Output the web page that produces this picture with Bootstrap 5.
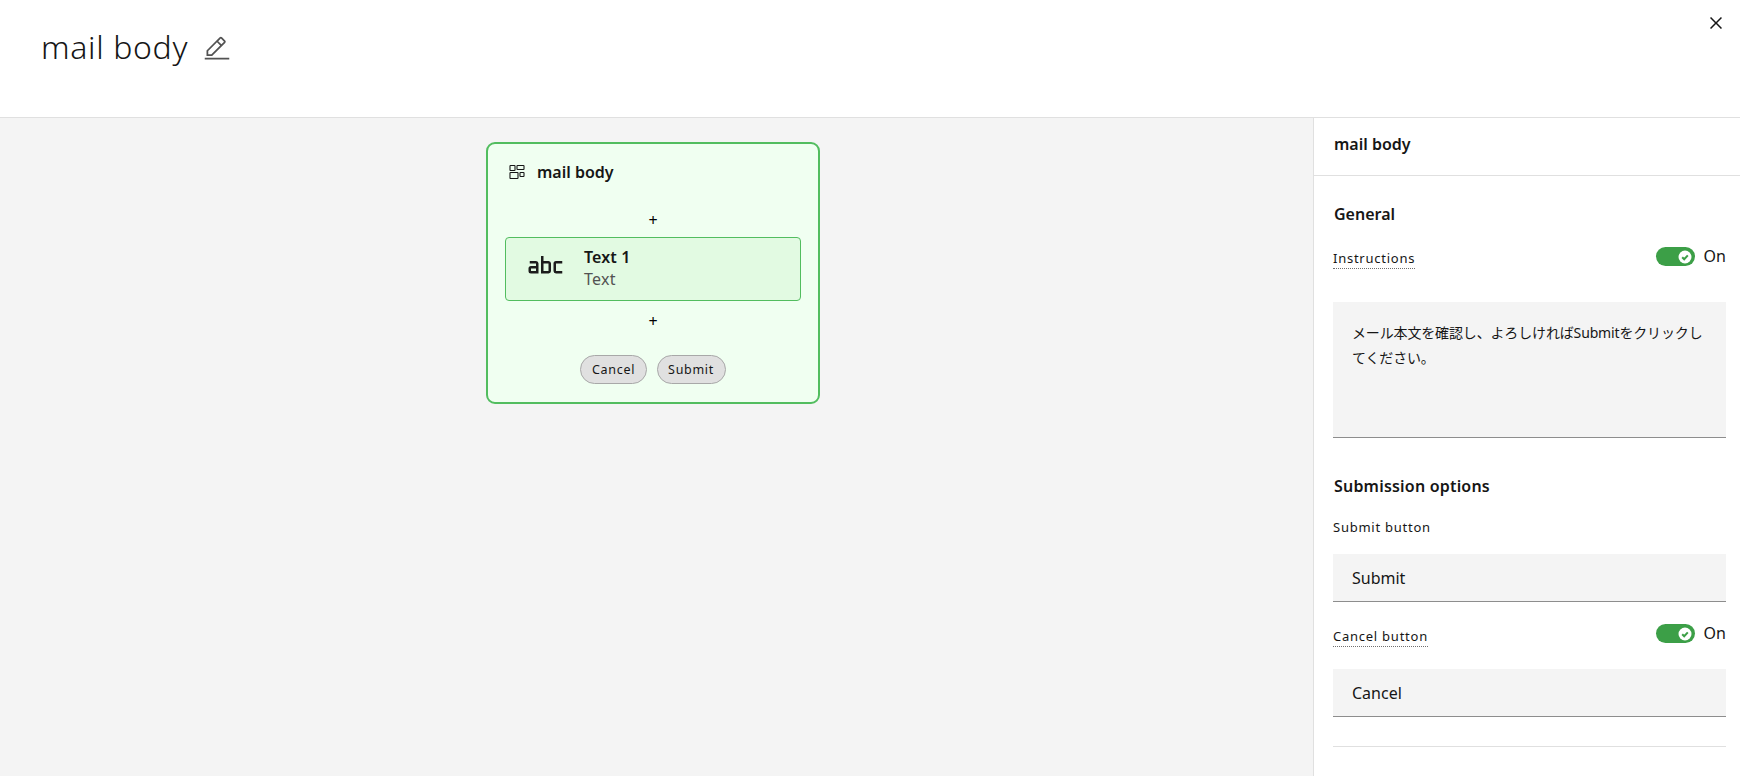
<!DOCTYPE html>
<html lang="ja">
<head>
<meta charset="utf-8">
<title>mail body</title>
<link href="https://cdn.jsdelivr.net/npm/bootstrap@5.3.0/dist/css/bootstrap.min.css" rel="stylesheet">
<style>
html,body{height:100%;overflow:hidden}
body{font-family:"Noto Sans","Noto Sans CJK JP",sans-serif;color:#161616;background:#fff}
.app-root{height:776px}
.top-head{height:118px;border-bottom:1px solid #e0e0e0;padding:25px 12px 0 41px}
.page-title{font-size:32px;line-height:44px;font-weight:300;margin:0;letter-spacing:.65px}
.edit-ico{width:28px;height:28px;margin-left:15px;margin-top:10px;color:#525252}
.close-ico{width:24px;height:24px;margin-top:-14px}
.canvas-area{background:#f4f4f4;padding:24px 0 0 486px;min-width:0}
.flow-box{width:334px;height:262px;border:2px solid #52bd5f;border-radius:9px;background:#f0fff1;padding:0 17px}
.flow-head{height:50px;padding:6px 0 0 4px;gap:12px;font-size:16px;font-weight:600}
.flow-head svg{width:16px;height:16px}
.plus-row{height:35px;font-size:16px;line-height:35px;text-align:center;color:#000}
.plus-first{margin-top:9px;height:34px}
.plus-last{height:41px;line-height:41px}
.field-item{height:64px;border:1px solid #52bd5f;border-radius:4px;background:#e2fae2;padding:8px 0 0 20px;gap:18px}
.field-item svg{width:40px;height:40px;margin-top:0;color:#1c1c1c;flex:none}
.field-name{font-size:16px;font-weight:600;line-height:22px;letter-spacing:.1px}
.field-type{font-size:16px;line-height:22px;color:#525252;letter-spacing:.3px}
.pill-row{gap:10px;margin-top:13px}
.pill-btn{height:29px;border:1px solid #a8a8a8;border-radius:15px;background:#e0e0e0;color:#161616;font-size:12.5px;line-height:27px;padding:0 10.5px;letter-spacing:.7px}
.side-panel{width:427px;border-left:1px solid #e0e0e0;background:#fff;flex:none}
.side-title{height:58px;border-bottom:1px solid #e0e0e0;padding:0 20px;font-size:16px;font-weight:600;line-height:52px}
.side-body{padding:0 14px 0 19px}
.sec-title{font-size:16px;font-weight:600;line-height:22px;margin:0 0 0 1px}
.sec-first{margin-top:27px}
.sec-second{margin-top:37px;letter-spacing:.2px}
.lbl{font-size:13px;letter-spacing:.75px;line-height:16px;display:inline-block}
.lbl-dot{border-bottom:1px dotted #6f6f6f;padding-bottom:2px;margin-top:3px}
.lbl-low{margin-top:4px}
.lbl-row{height:27px}
.row-one{margin-top:22px}
.switch-wrap{gap:9px;font-size:16px;line-height:16px}
.switch-text{margin-top:-2px}
.switch-track{width:39px;height:19px;border-radius:10px;background:#3c9f47;padding-right:3px}
.switch-track svg{width:14px;height:14px}
.txt-field.form-control{background:#f4f4f4;border:0;border-bottom:1px solid #8d8d8d;border-radius:0;color:#161616;font-size:14px;padding:0 19px;box-shadow:none}
textarea.txt-field.form-control{height:136px;margin-top:28px;padding:18px 18px 0 19px;line-height:25px;letter-spacing:-.15px;resize:none}
input.txt-field.form-control{height:48px;font-size:16px}
.sub-label{margin-top:17px;margin-bottom:16px}
.row-two{margin-top:22px;margin-bottom:18px}
.end-rule{height:1px;background:#e0e0e0;margin-top:29px}
</style>
</head>
<body>
<div class="app-root d-flex flex-column">
  <header class="top-head d-flex justify-content-between align-items-start">
    <div class="d-flex align-items-start">
      <h1 class="page-title">mail body</h1>
      <svg class="edit-ico" viewBox="0 0 32 32" fill="currentColor" aria-hidden="true"><path d="M2 26h28v2H2zM25.4 9c.8-.8.8-2 0-2.8l-3.6-3.6c-.8-.8-2-.8-2.8 0l-15 15V24h6.4l15-15zm-5-5L24 7.6l-3 3L17.4 7l3-3zM6 22v-3.6l10-10 3.6 3.6-10 10H6z"/></svg>
    </div>
    <svg class="close-ico" viewBox="0 0 32 32" fill="currentColor" aria-hidden="true"><path d="M24 9.4L22.6 8 16 14.6 9.4 8 8 9.4 14.6 16 8 22.6 9.4 24 16 17.4 22.6 24 24 22.6 17.4 16 24 9.4z"/></svg>
  </header>
  <div class="d-flex flex-grow-1 overflow-hidden">
    <main class="canvas-area flex-grow-1">
      <section class="flow-box">
        <div class="flow-head d-flex align-items-center">
          <svg viewBox="0 0 16 16" fill="none" stroke="currentColor" stroke-width="1.1" aria-hidden="true"><rect x="1" y="1.5" width="5" height="5" rx=".6"/><rect x="8" y="1.5" width="7" height="4" rx=".6"/><rect x="1" y="8.5" width="8" height="6" rx=".6"/><rect x="11" y="8.5" width="4" height="4" rx=".6"/></svg>
          <span>mail body</span>
        </div>
        <div class="plus-row plus-first">+</div>
        <div class="field-item d-flex">
          <svg viewBox="0 0 32 32" fill="currentColor" aria-hidden="true"><path d="M29 22h-5a2.003 2.003 0 0 1-2-2v-6a2.002 2.002 0 0 1 2-2h5v2h-5v6h5zM18 12h-4V8h-2v14h6a2.003 2.003 0 0 0 2-2v-6a2.002 2.002 0 0 0-2-2zm-4 8v-6h4v6zM8 12H3v2h5v2H4a2 2 0 0 0-2 2v2a2 2 0 0 0 2 2h6v-8a2.002 2.002 0 0 0-2-2zm0 8H4v-2h4z"/></svg>
          <div>
            <div class="field-name">Text 1</div>
            <div class="field-type">Text</div>
          </div>
        </div>
        <div class="plus-row plus-last">+</div>
        <div class="pill-row d-flex justify-content-center">
          <button type="button" class="btn pill-btn">Cancel</button>
          <button type="button" class="btn pill-btn">Submit</button>
        </div>
      </section>
    </main>
    <aside class="side-panel">
      <div class="side-title">mail body</div>
      <div class="side-body">
        <h2 class="sec-title sec-first">General</h2>
        <div class="lbl-row row-one d-flex justify-content-between align-items-start">
          <span class="lbl lbl-dot">Instructions</span>
          <div class="switch-wrap d-flex align-items-center">
            <span class="switch-track d-flex align-items-center justify-content-end">
              <svg viewBox="0 0 14 14" aria-hidden="true"><circle cx="7" cy="7" r="6.5" fill="#fff"/><path d="M4.2 7.2l2 2 3.6-3.8" fill="none" stroke="#3c9f47" stroke-width="2"/></svg>
            </span>
            <span class="switch-text">On</span>
          </div>
        </div>
        <textarea class="txt-field form-control">メール本文を確認し、よろしければSubmitをクリックしてください。</textarea>
        <h2 class="sec-title sec-second">Submission options</h2>
        <div class="sub-label"><span class="lbl">Submit button</span></div>
        <input class="txt-field form-control" type="text" value="Submit">
        <div class="lbl-row row-two d-flex justify-content-between align-items-start">
          <span class="lbl lbl-dot lbl-low">Cancel button</span>
          <div class="switch-wrap d-flex align-items-center">
            <span class="switch-track d-flex align-items-center justify-content-end">
              <svg viewBox="0 0 14 14" aria-hidden="true"><circle cx="7" cy="7" r="6.5" fill="#fff"/><path d="M4.2 7.2l2 2 3.6-3.8" fill="none" stroke="#3c9f47" stroke-width="2"/></svg>
            </span>
            <span class="switch-text">On</span>
          </div>
        </div>
        <input class="txt-field form-control" type="text" value="Cancel">
        <div class="end-rule"></div>
      </div>
    </aside>
  </div>
</div>
<script src="https://cdn.jsdelivr.net/npm/bootstrap@5.3.0/dist/js/bootstrap.bundle.min.js"></script>
</body>
</html>
